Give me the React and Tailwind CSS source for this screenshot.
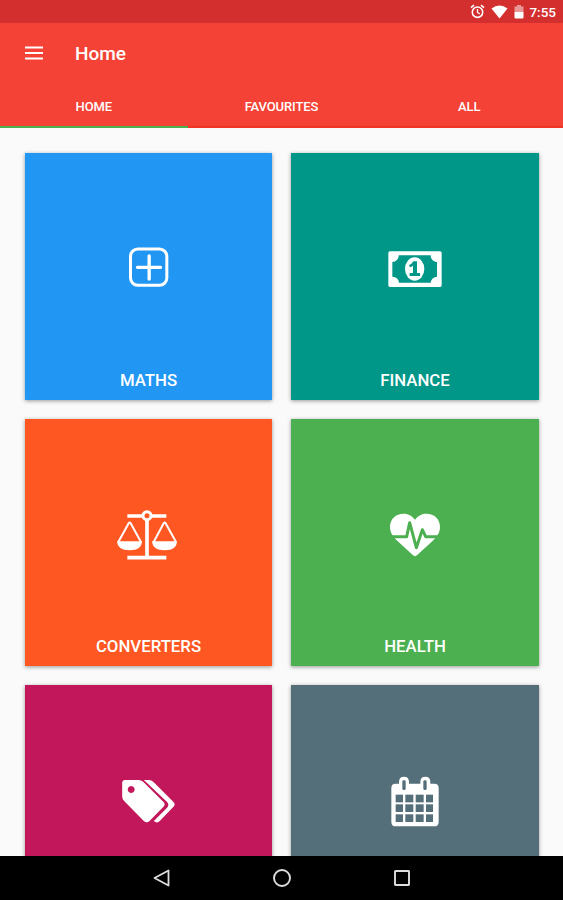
const tabs = ["HOME", "FAVOURITES", "ALL"];

// Every icon is drawn on a 300x270 grid, shown at 100x90
function MathsIcon() {
  return (
    <svg className="w-[100px] h-[90px]" viewBox="-4.5 -18 300 270" fill="none" stroke="currentColor">
      <rect x="90" y="57" width="109" height="109" rx="22" strokeWidth="9" />
      <path d="M146 78v69M111 112h69" strokeWidth="10" strokeLinecap="round" />
    </svg>
  );
}

function FinanceIcon() {
  return (
    <svg className="w-[100px] h-[90px]" viewBox="0 -18 300 270" fill="currentColor">
      <path
        fillRule="evenodd"
        d="M75 64h150q5 0 5 5v97q0 5-5 5H75q-5 0-5-5V69q0-5 5-5zM101 76a19 19 0 0 1-19 20v44a19 19 0 0 1 20 18h95a19 19 0 0 1 19-18V96a19 19 0 0 1-19-20z"
      />
      <ellipse cx="149" cy="117" rx="29" ry="35" />
      <path className="text-[#009688]" d="M145 94h11v35h9v9h-31v-9h10v-22q-4 4-9 5l-3-7q9-3 13-11z" />
    </svg>
  );
}

function ConvertersIcon() {
  return (
    <svg className="w-[100px] h-[90px]" viewBox="-4 0 300 270" fill="none" stroke="currentColor">
      <path d="M81 78h45M153 78h45M81 203h117" strokeWidth="11" />
      <path d="M140 90v113" strokeWidth="11" />
      <circle cx="140" cy="77" r="12" strokeWidth="9" />
      <path d="M54 156l31-56q3-5 6 0l31 56M160 156l30-56q3-5 6 0l31 56" strokeWidth="6" />
      <path d="M50 154h75q-1 27-37 27t-38-27zM155 154h75q-1 27-37 27t-38-27z" fill="currentColor" stroke="none" />
    </svg>
  );
}

function HealthIcon() {
  return (
    <svg className="w-[100px] h-[90px]" viewBox="0 0 300 270">
      <path
        fill="currentColor"
        d="M150 89C139 75 127 71 116 71C92 71 75 87 75 111C75 128 84 139 95 151L144 196q6 5 12 0L205 151C216 139 225 128 225 111C225 87 208 71 184 71C171 71 160 76 150 89z"
      />
      <path
        className="stroke-[#4caf50]"
        fill="none"
        strokeWidth="9"
        strokeLinejoin="round"
        d="M74 140h51l9-42l20 75l18-54l10 21h44"
      />
    </svg>
  );
}

function TagsIcon() {
  return (
    <svg className="w-[100px] h-[90px]" viewBox="-4.5 -12 300 270" fill="currentColor">
      <path
        fillRule="evenodd"
        d="M74 60h40q8 0 14 5l61 61q7 7 0 14l-42 43q-8 8-17 0l-59-60q-6-6-6-13V69q0-9 9-9zM92 78a10.500 10.500 0 1 0 0.100 0z"
      />
      <path d="M130 60h14q9 0 15 6l60 60q7 7 0 14l-42 44q-8 7-17-1l39-39q9-10 0-19z" />
    </svg>
  );
}

function CalendarIcon() {
  const cols = [92, 121, 152, 183];
  const rows = [104, 133, 163];
  const widths = [22, 24, 24, 21];
  return (
    <svg className="w-[100px] h-[90px]" viewBox="0 -12 300 270">
      <path
        fill="currentColor"
        d="M92 71h10v-5q0-16 15-16t15 16v5h34v-5q0-16 15-16t15 16v5h12q13 0 13 13v101q0 14-13 14H92q-13 0-13-14V84q0-13 13-13z"
      />
      <g className="fill-[#546e7a]">
        <rect x="112" y="61" width="10" height="29" rx="4" />
        <rect x="175" y="61" width="10" height="29" rx="4" />
        {rows.map((y) =>
          cols.map((x, i) => <rect key={`${x}-${y}`} x={x} y={y} width={widths[i]} height="23" />)
        )}
      </g>
    </svg>
  );
}

const categories = [
  { name: "MATHS", color: "bg-[#2196f3]", Icon: MathsIcon },
  { name: "FINANCE", color: "bg-[#009688]", Icon: FinanceIcon },
  { name: "CONVERTERS", color: "bg-[#ff5722]", Icon: ConvertersIcon },
  { name: "HEALTH", color: "bg-[#4caf50]", Icon: HealthIcon },
  { name: "", color: "bg-[#c2185b]", Icon: TagsIcon },
  { name: "", color: "bg-[#546e7a]", Icon: CalendarIcon },
];

function StatusBar() {
  return (
    <div className="h-[23px] shrink-0 bg-[#d32f2f] text-white flex items-center justify-end pr-[7px]">
      <svg className="w-[15px] h-[15px] mr-[6px]" viewBox="0 0 15 15" fill="none" stroke="currentColor">
        <circle cx="7.500" cy="8.200" r="5.200" strokeWidth="1.600" />
        <path d="M7.500 5v3.500l2.300 1.400" strokeWidth="1.300" />
        <path d="M1 3.700L4 1.200M14 3.700L11 1.200" strokeWidth="1.600" />
      </svg>
      <svg className="w-[17px] h-[14px] mr-[6px]" viewBox="0 0 17 14" fill="currentColor">
        <path d="M0.500 3.500Q8.500-2.500 16.500 3.500L8.500 13.500z" />
      </svg>
      <svg className="w-[10px] h-[14px] mr-[5px] mt-px" viewBox="0 0 10 14" fill="currentColor">
        <path opacity="0.5" d="M3 0h4v1.500h2.500V7h-9V1.500H3z" />
        <path d="M0.500 7h9v5.500q0 1-1 1h-7q-1 0-1-1z" />
      </svg>
      <span className="text-[13.500px] leading-[23px] font-medium mt-[2px]">7:55</span>
    </div>
  );
}

function Header() {
  return (
    <header className="h-[105px] shrink-0 bg-[#f44336] text-white flex flex-col">
      <div className="h-[62px] pl-[25px] flex items-center">
        <svg className="w-[18px] h-[14px] -mt-[2px]" viewBox="0 0 18 14" stroke="currentColor" strokeWidth="1.800">
          <path d="M0 1.500h18M0 7h18M0 12.500h18" />
        </svg>
        <h1 className="ml-[32px] mt-px text-[19px] font-medium">Home</h1>
      </div>
      <nav className="flex-1 grid grid-cols-3">
        {tabs.map((tab, i) => (
          <div
            key={tab}
            className={`flex justify-center pt-[13px] text-[13px] leading-[18px] font-medium tracking-[-0.1px] border-b-2 ${
              i === 0 ? "border-[#4caf50]" : "border-[#ee3528]"
            }`}
          >
            {tab}
          </div>
        ))}
      </nav>
    </header>
  );
}

function NavBar() {
  return (
    <div className="h-[44px] shrink-0 bg-black text-[#dedede] flex items-center justify-center gap-[100px]">
      <svg className="w-5 h-5" viewBox="0 0 20 20" fill="none" stroke="currentColor" strokeWidth="1.800">
        <path d="M16.500 2.500v15L2.500 10z" strokeLinejoin="round" />
      </svg>
      <svg className="w-5 h-5" viewBox="0 0 20 20" fill="none" stroke="currentColor" strokeWidth="1.900">
        <circle cx="10" cy="10" r="8" />
      </svg>
      <svg className="w-5 h-5" viewBox="0 0 20 20" fill="none" stroke="currentColor" strokeWidth="1.900">
        <rect x="3" y="3" width="14" height="14" rx="0.500" />
      </svg>
    </div>
  );
}

export default function App() {
  return (
    <div className="w-[563px] h-[900px] flex flex-col overflow-hidden bg-[#fafafa] font-['Roboto',sans-serif]">
      <StatusBar />
      <Header />
      <main className="flex-1 min-h-0 overflow-hidden pt-[25px] pl-[25px] grid grid-cols-[247px_248px] auto-rows-[247px] content-start gap-[19px]">
        {categories.map(({ name, color, Icon }, i) => (
          <div
            key={i}
            className={`${color} text-white flex flex-col items-center pt-[71px] shadow-[0_1px_4px_rgba(0,0,0,0.4)]`}
          >
            <Icon />
            {name && <p className="mt-[54px] text-[16.800px] leading-6 font-medium">{name}</p>}
          </div>
        ))}
      </main>
      <NavBar />
    </div>
  );
}
